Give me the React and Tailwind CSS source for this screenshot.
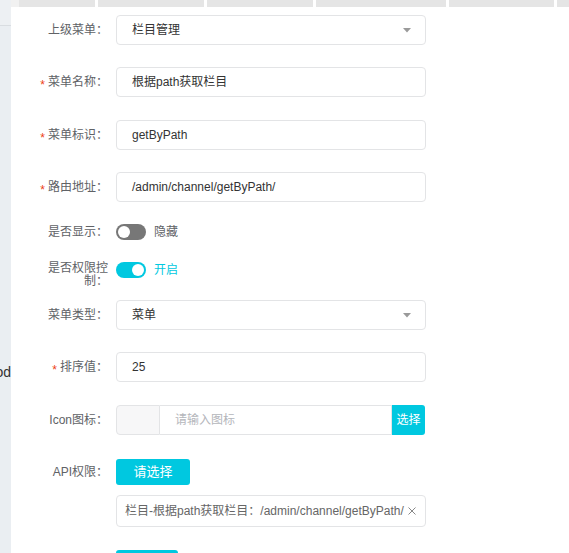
import React from "react";

const CYAN = "bg-[#00c8e0]";

function Label({ children, required }) {
  return (
    <div className="w-[97px] shrink-0 flex justify-end items-center text-[12px] text-[#606266] leading-[16px] whitespace-nowrap">
      {required && (
        <span className="text-[#ed4014] mr-[3px] pt-[5px] leading-[12px]">*</span>
      )}
      <span>{children}</span>
    </div>
  );
}

function Arrow() {
  return (
    <svg width="8" height="5" viewBox="0 0 8 5" className="shrink-0">
      <path d="M0 0 L8 0 L4 4.5 Z" fill="#9a9a9a" />
    </svg>
  );
}

function TextBox({ children }) {
  return (
    <div className="ml-[8px] w-[310px] h-[30px] border border-[#e3e4e6] rounded-[4px] flex items-center px-[15px] text-[12px] text-[#333]">
      {children}
    </div>
  );
}

function SelectBox({ children }) {
  return (
    <div className="ml-[8px] w-[310px] h-[30px] border border-[#e3e4e6] rounded-[4px] flex items-center justify-between pl-[15px] pr-[14px] text-[12px] text-[#333]">
      <span>{children}</span>
      <Arrow />
    </div>
  );
}

function Switch({ on }) {
  return (
    <div
      className={`w-[30px] h-[16px] rounded-full flex items-center px-[2px] shrink-0 ${
        on ? "bg-[#00c8e0] justify-end" : "bg-[#777777] justify-start"
      }`}
    >
      <div className="w-[12px] h-[12px] rounded-full bg-white" />
    </div>
  );
}

export default function App() {
  return (
    <div className="w-[569px] h-[553px] overflow-hidden bg-white flex font-['Liberation_Sans','Noto_Sans_CJK_SC',sans-serif]">
      {/* left strip */}
      <div className="w-[11px] shrink-0 bg-[#eaeef2] flex flex-col overflow-hidden">
        <div className="h-[26px] bg-[#edf0f3] border-b border-[#d9dde1] shrink-0" />
        <div className="mt-[337px] flex justify-end text-[14px] text-[#333] leading-[18px] whitespace-nowrap">
          od
        </div>
      </div>

      {/* main */}
      <div className="flex-1 flex flex-col">
        {/* tab bar */}
        <div className="h-[7px] flex gap-[3px] shrink-0">
          <div className="w-[8px] -mr-[3px] bg-[#f1f1f1]" />
          <div className="w-[76px] bg-[#e5e5e5]" />
          <div className="w-[106px] bg-[#e5e5e5]" />
          <div className="w-[106px] bg-[#e5e5e5]" />
          <div className="w-[130px] bg-[#e5e5e5]" />
          <div className="w-[105px] bg-[#e5e5e5]" />
          <div className="flex-1 bg-[#e5e5e5]" />
        </div>

        {/* form */}
        <div className="flex flex-col">
          <div className="mt-[8px] flex items-center">
            <Label>上级菜单：</Label>
            <SelectBox>栏目管理</SelectBox>
          </div>

          <div className="mt-[22px] flex items-center">
            <Label required>菜单名称：</Label>
            <TextBox>根据path获取栏目</TextBox>
          </div>

          <div className="mt-[23px] flex items-center">
            <Label required>菜单标识：</Label>
            <TextBox>getByPath</TextBox>
          </div>

          <div className="mt-[22px] flex items-center">
            <Label required>路由地址：</Label>
            <TextBox>/admin/channel/getByPath/</TextBox>
          </div>

          <div className="mt-[22px] flex items-center h-[16px]">
            <Label>是否显示：</Label>
            <div className="ml-[8px] flex items-center gap-[8px]">
              <Switch on={false} />
              <span className="text-[12px] text-[#606266]">隐藏</span>
            </div>
          </div>

          <div className="mt-[22px] flex items-start">
            <div className="w-[97px] shrink-0 flex justify-end text-[12px] text-[#606266] leading-[13px]">
              <span className="w-[64px] text-right">是否权限控制：</span>
            </div>
            <div className="ml-[8px] -mt-[1px] flex items-center gap-[8px]">
              <Switch on />
              <span className="text-[12px] text-[#00c8e0]">开启</span>
            </div>
          </div>

          <div className="mt-[12px] flex items-center">
            <Label>菜单类型：</Label>
            <SelectBox>菜单</SelectBox>
          </div>

          <div className="mt-[22px] flex items-center">
            <Label required>排序值：</Label>
            <TextBox>25</TextBox>
          </div>

          <div className="mt-[23px] flex items-center">
            <Label>Icon图标：</Label>
            <div className="ml-[8px] w-[309px] h-[30px] flex text-[12px]">
              <div className="w-[44px] shrink-0 bg-[#f7f7f8] border border-[#e3e4e6] rounded-l-[4px]" />
              <div className="flex-1 border-y border-r border-[#e3e4e6] flex items-center px-[15px] text-[#b4b6bb]">
                请输入图标
              </div>
              <div className={`w-[33px] shrink-0 ${CYAN} rounded-r-[3px] flex items-center justify-center text-white text-[12px]`}>
                选择
              </div>
            </div>
          </div>

          <div className="mt-[24px] flex items-center">
            <Label>API权限：</Label>
            <div className={`ml-[8px] w-[74px] h-[26px] ${CYAN} rounded-[3px] flex items-center justify-center text-white text-[13px]`}>
              请选择
            </div>
          </div>

          <div className="mt-[10px] flex">
            <div className="w-[97px] shrink-0" />
            <div className="ml-[8px] w-[310px] h-[32px] border border-[#e3e4e6] rounded-[4px] flex items-center justify-between pl-[8px] pr-[9px] text-[12px] text-[#666]">
              <span className="whitespace-nowrap">栏目-根据path获取栏目：/admin/channel/getByPath/</span>
              <svg width="8" height="8" viewBox="0 0 8 8" className="shrink-0">
                <path d="M0.5 0.5 L7.5 7.5 M7.5 0.5 L0.5 7.5" stroke="#888" strokeWidth="1" />
              </svg>
            </div>
          </div>

          <div className="mt-[23px] flex">
            <div className="w-[97px] shrink-0" />
            <div className={`ml-[8px] w-[62px] h-[30px] ${CYAN} rounded-[3px]`} />
          </div>
        </div>
      </div>
    </div>
  );
}
